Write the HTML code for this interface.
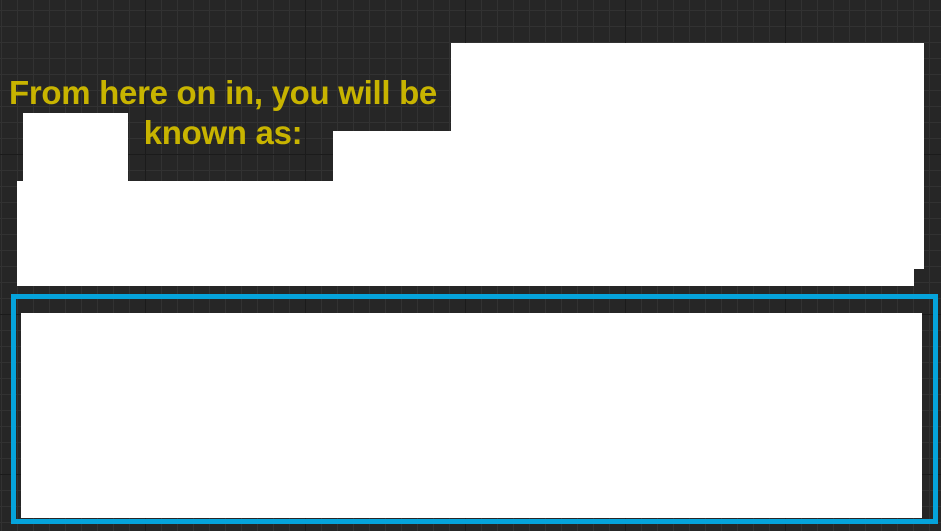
<!DOCTYPE html>
<html><head><style>
html,body{margin:0;padding:0}
body{width:941px;height:531px;overflow:hidden;position:relative;background-color:#262626;
background-image:
linear-gradient(to right,#1b1b1b 1px,transparent 1px),
linear-gradient(to bottom,#1b1b1b 1px,transparent 1px),
linear-gradient(to right,#323232 1px,transparent 1px),
linear-gradient(to bottom,#323232 1px,transparent 1px);
background-size:160px 160px,160px 160px,16px 16px,16px 16px;
background-position:145px 0,0 154px,1px 0,0 10px;}
.w{position:absolute;background:#fff}
.t{position:absolute;left:0px;width:446px;text-align:center;color:#c8b400;font-family:"Liberation Sans",sans-serif;font-weight:bold;font-size:33px;line-height:40px;top:73px;letter-spacing:-0.3px}
.box{position:absolute;left:11px;top:294px;width:917px;height:220px;border:5px solid #05a3db}
</style></head><body>
<div class="w" style="left:451px;top:43px;width:473px;height:226px"></div>
<div class="w" style="left:451px;top:43px;width:463px;height:243px"></div>
<div class="t">From here on in, you will be<br>known as:</div>
<div class="w" style="left:23px;top:113px;width:105px;height:70px"></div>
<div class="w" style="left:333px;top:131px;width:120px;height:52px"></div>
<div class="w" style="left:17px;top:181px;width:897px;height:105px"></div>
<div class="box"></div>
<div class="w" style="left:21px;top:313px;width:901px;height:205px"></div>
</body></html>
